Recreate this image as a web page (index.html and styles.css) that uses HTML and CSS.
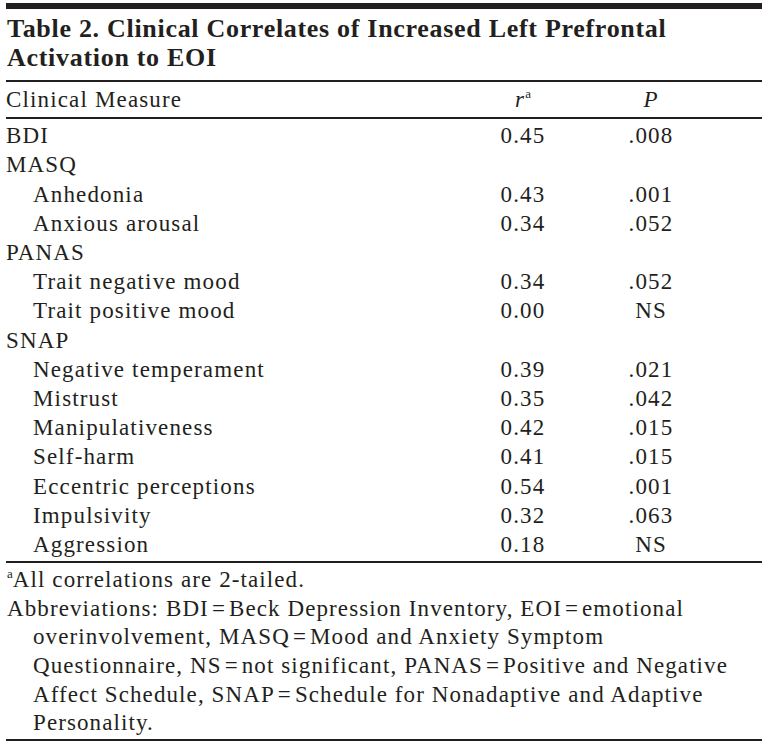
FILE: index.html
```html
<!DOCTYPE html>
<html>
<head>
<meta charset="utf-8">
<link rel="stylesheet" href="styles.css">
</head>
<body>
<div class="page">
  <div class="topbar"></div>
  <h1 class="title">Table 2. Clinical Correlates of Increased Left Prefrontal<br>Activation to EOI</h1>
  <table class="data">
    <colgroup>
      <col class="col-measure">
      <col class="col-r">
      <col class="col-p">
    </colgroup>
    <thead>
      <tr><th class="measure">Clinical Measure</th><th class="c1"><i>r</i><sup>a</sup></th><th class="c2"><i>P</i></th></tr>
    </thead>
    <tbody>
      <tr><td class="measure">BDI</td><td class="c1">0.45</td><td class="c2">.008</td></tr>
      <tr><td class="measure">MASQ</td><td class="c1"></td><td class="c2"></td></tr>
      <tr><td class="measure sub">Anhedonia</td><td class="c1">0.43</td><td class="c2">.001</td></tr>
      <tr><td class="measure sub">Anxious arousal</td><td class="c1">0.34</td><td class="c2">.052</td></tr>
      <tr><td class="measure">PANAS</td><td class="c1"></td><td class="c2"></td></tr>
      <tr><td class="measure sub">Trait negative mood</td><td class="c1">0.34</td><td class="c2">.052</td></tr>
      <tr><td class="measure sub">Trait positive mood</td><td class="c1">0.00</td><td class="c2">NS</td></tr>
      <tr><td class="measure">SNAP</td><td class="c1"></td><td class="c2"></td></tr>
      <tr><td class="measure sub">Negative temperament</td><td class="c1">0.39</td><td class="c2">.021</td></tr>
      <tr><td class="measure sub">Mistrust</td><td class="c1">0.35</td><td class="c2">.042</td></tr>
      <tr><td class="measure sub">Manipulativeness</td><td class="c1">0.42</td><td class="c2">.015</td></tr>
      <tr><td class="measure sub">Self-harm</td><td class="c1">0.41</td><td class="c2">.015</td></tr>
      <tr><td class="measure sub">Eccentric perceptions</td><td class="c1">0.54</td><td class="c2">.001</td></tr>
      <tr><td class="measure sub">Impulsivity</td><td class="c1">0.32</td><td class="c2">.063</td></tr>
      <tr><td class="measure sub">Aggression</td><td class="c1">0.18</td><td class="c2">NS</td></tr>
    </tbody>
  </table>
  <div class="notes">
    <p class="note"><sup>a</sup>All correlations are 2-tailed.</p>
    <p class="note hang">Abbreviations: BDI&#8202;=&#8202;Beck Depression Inventory, EOI&#8202;=&#8202;emotional<br>overinvolvement, MASQ&#8202;=&#8202;Mood and Anxiety Symptom<br>Questionnaire, NS&#8202;=&#8202;not significant, PANAS&#8202;=&#8202;Positive and Negative<br>Affect Schedule, SNAP&#8202;=&#8202;Schedule for Nonadaptive and Adaptive<br>Personality.</p>
  </div>
</div>
</body>
</html>
```
FILE: styles.css
```css
html, body {
  margin: 0;
  padding: 0;
  background: #ffffff;
}

body {
  font-family: "Liberation Serif", "Times New Roman", serif;
  color: #231f20;
}

.page {
  margin-left: 6px;
  width: 756px;
  padding-top: 3px;
}

.topbar {
  height: 6px;
  background: #231f20;
}

.title {
  margin: 5px 0 0 0;
  padding: 0 0 8px 1px;
  font-size: 26px;
  line-height: 29px;
  font-weight: bold;
  letter-spacing: 0.7px;
  border-bottom: 2px solid #231f20;
}

.data {
  width: 756px;
  table-layout: fixed;
  border-collapse: collapse;
  font-size: 23px;
  line-height: 29.2px;
  letter-spacing: 1.15px;
}

.col-measure {
  width: 454px;
}

.col-r {
  width: 126px;
}

.col-p {
  width: 176px;
}

.data th {
  font-weight: normal;
  padding: 3px 0 3px 0;
  border-bottom: 2px solid #231f20;
}

.data td {
  padding: 0;
}

.data tbody tr:first-child td {
  padding-top: 2px;
}

.data tbody tr:last-child td {
  padding-bottom: 2px;
  border-bottom: 2px solid #231f20;
}

.measure {
  text-align: left;
  padding-left: 1px;
}

.data .sub {
  padding-left: 27px;
}

.c1 {
  text-align: center;
}

.c2 {
  text-align: center;
}

.data .c2 {
  padding-right: 46px;
}

.data sup, .note sup {
  font-size: 13px;
  line-height: 0;
  letter-spacing: 0;
  vertical-align: 9px;
}

.notes {
  font-size: 23px;
  line-height: 28.6px;
  letter-spacing: 1.1px;
  padding: 3px 0 1px 1px;
  border-bottom: 2px solid #231f20;
}

.note {
  margin: 0;
  white-space: nowrap;
}

.hang {
  padding-left: 26px;
  text-indent: -26px;
}
```
